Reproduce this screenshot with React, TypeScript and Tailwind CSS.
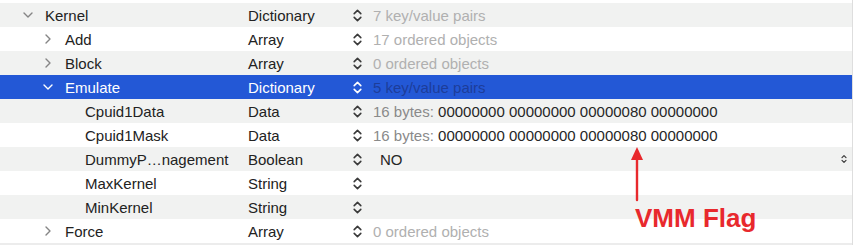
import React from "react";

type Row = {
  key: string;
  depth: 0 | 1 | 2;
  chevron?: "down" | "right";
  type: string;
  value?: React.ReactNode;
  selected?: boolean;
  popup?: boolean;
};

const INDENT = ["pl-[18px]", "pl-[38px]", "pl-[58px]"];

const dataValue = (
  <>
    <span className="text-[#8a8a8a]">16 bytes: </span>
    <span className="text-[#262626]">00000000 00000000 00000080 00000000</span>
  </>
);

const ROWS: Row[] = [
  { key: "Kernel", depth: 0, chevron: "down", type: "Dictionary", value: "7 key/value pairs" },
  { key: "Add", depth: 1, chevron: "right", type: "Array", value: "17 ordered objects" },
  { key: "Block", depth: 1, chevron: "right", type: "Array", value: "0 ordered objects" },
  { key: "Emulate", depth: 1, chevron: "down", type: "Dictionary", value: "5 key/value pairs", selected: true },
  { key: "Cpuid1Data", depth: 2, type: "Data", value: dataValue },
  { key: "Cpuid1Mask", depth: 2, type: "Data", value: dataValue },
  { key: "DummyP\u2026nagement", depth: 2, type: "Boolean", value: <span className="ml-[7px] text-[#262626]">NO</span>, popup: true },
  { key: "MaxKernel", depth: 2, type: "String" },
  { key: "MinKernel", depth: 2, type: "String" },
  { key: "Force", depth: 1, chevron: "right", type: "Array", value: "0 ordered objects" },
];

function Chevron({ dir, color }: { dir: "down" | "right"; color: string }) {
  return dir === "down" ? (
    <svg width="10" height="6" viewBox="0 0 10 6" fill="none">
      <path d="M1 1l4 4 4-4" stroke={color} strokeWidth="1.4" strokeLinecap="round" strokeLinejoin="round" />
    </svg>
  ) : (
    <svg width="6" height="10" viewBox="0 0 6 10" fill="none">
      <path d="M1 1l4 4-4 4" stroke={color} strokeWidth="1.4" strokeLinecap="round" strokeLinejoin="round" />
    </svg>
  );
}

function Stepper({ color }: { color: string }) {
  return (
    <svg width="9" height="13" viewBox="0 0 9 13" fill="none">
      <path d="M1.2 4.6L4.5 1.4l3.3 3.2M1.2 8.4l3.3 3.2 3.3-3.2" stroke={color} strokeWidth="1.6" strokeLinecap="round" strokeLinejoin="round" />
    </svg>
  );
}

export default function App() {
  return (
    <div className="relative w-[854px] h-[245px] bg-white overflow-hidden font-['Liberation_Sans',Arial,sans-serif] text-[15px] leading-none">
      <div className="w-[853px] pt-[3px] border-r border-[#dedede]">
        {ROWS.map((r, i) => {
          const bg = r.selected ? "bg-[#2358d6]" : i % 2 === 0 ? "bg-[#f1f2f1]" : "bg-white";
          const fg = r.selected ? "text-white" : "text-[#222222]";
          return (
            <div key={r.key} className={`flex items-center h-6 ${bg}`}>
              <div className={`flex items-center w-[248px] shrink-0 ${INDENT[r.depth]} ${fg}`}>
                <span className="w-5 flex justify-center">
                  {r.chevron && <Chevron dir={r.chevron} color={r.selected ? "#ffffff" : "#858585"} />}
                </span>
                <span className="ml-[7px]">{r.key}</span>
              </div>
              <div className={`w-[105px] shrink-0 ${fg}`}>{r.type}</div>
              <div className="w-5 shrink-0 flex items-center">
                <Stepper color={r.selected ? "#ffffff" : "#3a3a3a"} />
              </div>
              <div className={`flex-1 ${r.selected ? "text-[#1d3d9a]" : "text-[#b0b0b0]"}`}>{r.value}</div>
              {r.popup && (
                <div className="w-[11px] shrink-0 flex items-center">
                  <svg width="6" height="10" viewBox="0 0 6 10" fill="none">
                    <path d="M1 3.6L3 1.6l2 2M1 6.4l2 2 2-2" stroke="#3a3a3a" strokeWidth="1.2" strokeLinecap="round" strokeLinejoin="round" />
                  </svg>
                </div>
              )}
            </div>
          );
        })}
        <div className="h-[2px] bg-[#ececec]" />
      </div>

      {/* annotation */}
      <svg className="absolute left-[628px] top-[146px]" width="18" height="56" viewBox="0 0 18 56" fill="none">
        <path d="M9 10V54" stroke="#e8292d" strokeWidth="2.4" strokeLinecap="round" />
        <path d="M9 1L3 14h12z" fill="#e8292d" />
      </svg>
      <div className="absolute left-[635px] top-[205px] text-[26px] font-bold text-[#e8292d]">VMM Flag</div>
    </div>
  );
}
